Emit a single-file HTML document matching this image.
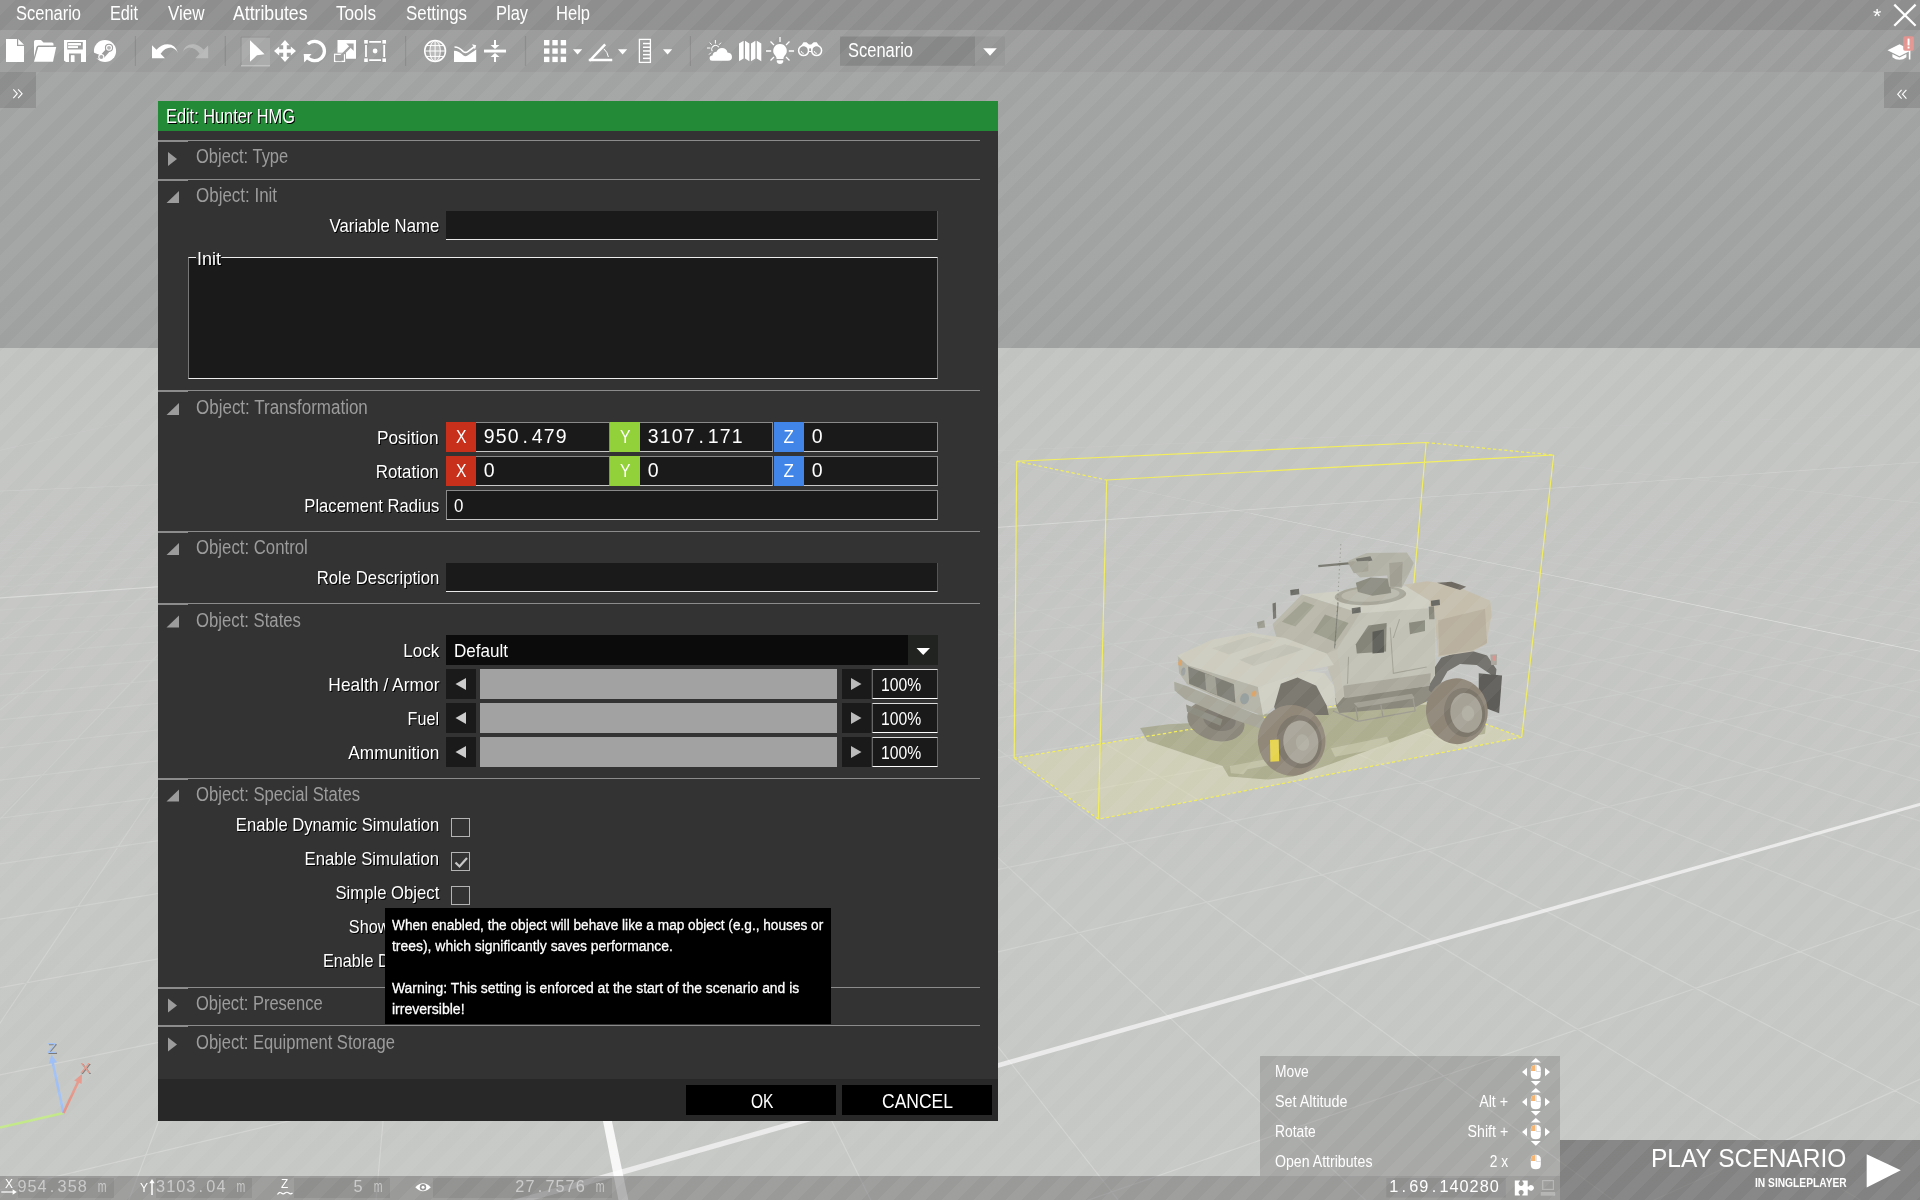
<!DOCTYPE html><html><head><meta charset='utf-8'><title>Eden Editor - Edit: Hunter HMG</title><style>
html,body{margin:0;padding:0;background:#a2a3a2;}
body{width:1920px;height:1200px;position:relative;overflow:hidden;font-family:"Liberation Sans",sans-serif;}
.a{position:absolute;}
.t{position:absolute;white-space:pre;line-height:1;display:block;}
svg{position:absolute;left:0;top:0;overflow:visible;}
</style></head><body>
<div class="a" id="sky" style="left:0;top:0;width:1920px;height:348px;background:linear-gradient(#a2a4a3,#a1a3a2 70%,#9fa1a0);"></div>
<div class="a" id="ground" style="left:0;top:348px;width:1920px;height:852px;background:linear-gradient(#c1c3c1,#c4c6c3 30%,#c6c8c5);"></div>
<svg width="1920" height="1200" viewBox="0 0 1920 1200"><defs><linearGradient id="gf" x1="0" y1="0" x2="0" y2="1"><stop offset="0" stop-color="#fff" stop-opacity="0"/><stop offset="0.13" stop-color="#fff" stop-opacity="0"/><stop offset="0.4" stop-color="#fff" stop-opacity="0.42"/><stop offset="0.7" stop-color="#fff" stop-opacity="0.8"/><stop offset="1" stop-color="#fff" stop-opacity="1"/></linearGradient><linearGradient id="gf2" x1="0" y1="0" x2="0" y2="1"><stop offset="0" stop-color="#fff" stop-opacity="0"/><stop offset="0.05" stop-color="#fff" stop-opacity="0.1"/><stop offset="0.2" stop-color="#fff" stop-opacity="0.7"/><stop offset="0.5" stop-color="#fff" stop-opacity="1"/><stop offset="1" stop-color="#fff" stop-opacity="1"/></linearGradient><mask id="gm" maskUnits="userSpaceOnUse" x="0" y="349" width="1920" height="851"><rect x="0" y="349" width="1920" height="851" fill="url(#gf)"/></mask><mask id="gm2" maskUnits="userSpaceOnUse" x="0" y="349" width="1920" height="851"><rect x="0" y="349" width="1920" height="851" fill="url(#gf2)"/></mask><clipPath id="gc"><rect x="0" y="349" width="1920" height="851"/></clipPath></defs><g clip-path="url(#gc)"><g mask="url(#gm)"><path d="M447.8 349.5L-3901.3 1215.0M448.0 349.5L-3649.9 1215.0M448.5 349.5L-3147.0 1215.0M448.7 349.5L-2895.5 1215.0M448.9 349.5L-2644.1 1215.0M449.2 349.5L-2392.6 1215.0M449.4 349.5L-2141.1 1215.0M449.6 349.5L-1889.6 1215.0M449.9 349.5L-1638.1 1215.0M450.1 349.5L-1386.5 1215.0M450.3 349.5L-1135.0 1215.0M450.6 349.5L-883.4 1215.0M450.8 349.5L-631.8 1215.0M451.0 349.5L-380.2 1215.0M451.3 349.5L-128.6 1215.0M451.5 349.5L123.1 1215.0M451.7 349.5L374.7 1215.0M452.2 349.5L878.1 1215.0M452.4 349.5L1129.8 1215.0M452.7 349.5L1381.5 1215.0M452.9 349.5L1633.2 1215.0M453.1 349.5L1884.9 1215.0M453.4 349.5L2136.7 1215.0M453.6 349.5L2388.5 1215.0M453.8 349.5L2640.3 1215.0M454.1 349.5L2892.1 1215.0M454.3 349.5L3143.9 1215.0M454.5 349.5L3395.7 1215.0M454.8 349.5L3647.6 1215.0M455.0 349.5L3899.5 1215.0M455.2 349.5L4151.3 1215.0M455.4 349.5L4403.2 1215.0M455.9 349.5L4907.1 1215.0M456.1 349.5L5159.0 1215.0M456.4 349.5L5411.0 1215.0M456.6 349.5L5663.0 1215.0M456.8 349.5L5915.0 1215.0M457.1 349.5L6167.0 1215.0M457.3 349.5L6419.0 1215.0M457.5 349.5L6671.0 1215.0M457.8 349.5L6923.1 1215.0M458.0 349.5L7175.2 1215.0M458.2 349.5L7427.3 1215.0M458.5 349.5L7679.4 1215.0M458.7 349.5L7931.5 1215.0M458.9 349.5L8183.6 1215.0M459.2 349.5L8435.8 1215.0M459.6 349.5L8940.1 1215.0M459.9 349.5L9192.3 1215.0M460.1 349.5L9444.5 1215.0M460.3 349.5L9696.8 1215.0M460.6 349.5L9949.0 1215.0M460.8 349.5L10201.3 1215.0M461.0 349.5L10453.5 1215.0M461.3 349.5L10705.8 1215.0M461.5 349.5L10958.1 1215.0M461.7 349.5L11210.5 1215.0M462.0 349.5L11462.8 1215.0M462.2 349.5L11715.1 1215.0M462.4 349.5L11967.5 1215.0M462.7 349.5L12219.9 1215.0M462.9 349.5L12472.3 1215.0M463.4 349.5L12977.2 1215.0M463.6 349.5L13229.6 1215.0M463.8 349.5L13482.1 1215.0M464.1 349.5L13734.5 1215.0M464.3 349.5L13987.0 1215.0M464.5 349.5L14239.5 1215.0M464.8 349.5L14492.1 1215.0M465.0 349.5L14744.6 1215.0M465.2 349.5L14997.2 1215.0M465.5 349.5L15249.7 1215.0M465.7 349.5L15502.3 1215.0M465.9 349.5L15754.9 1215.0M466.2 349.5L16007.6 1215.0M466.4 349.5L16260.2 1215.0M466.6 349.5L16512.8 1215.0M467.1 349.5L17018.2 1215.0M467.3 349.5L17270.9 1215.0M467.6 349.5L17523.6 1215.0M467.8 349.5L17776.3 1215.0M468.0 349.5L18029.1 1215.0M468.3 349.5L18281.8 1215.0M468.5 349.5L18534.6 1215.0M468.7 349.5L18787.4 1215.0M469.0 349.5L19040.2 1215.0M469.2 349.5L19293.0 1215.0M469.4 349.5L19545.9 1215.0M469.7 349.5L19798.7 1215.0M469.9 349.5L20051.6 1215.0M470.1 349.5L20304.5 1215.0M470.4 349.5L20557.4 1215.0M470.8 349.5L21063.2 1215.0M471.1 349.5L21316.2 1215.0M471.3 349.5L21569.1 1215.0M471.5 349.5L21822.1 1215.0M471.8 349.5L22075.1 1215.0M472.0 349.5L22328.1 1215.0M472.2 349.5L22581.2 1215.0M472.5 349.5L22834.2 1215.0M472.7 349.5L23087.3 1215.0M472.9 349.5L23340.3 1215.0M473.2 349.5L23593.4 1215.0M473.4 349.5L23846.5 1215.0M473.6 349.5L24099.7 1215.0M473.9 349.5L24352.8 1215.0M474.1 349.5L24605.9 1215.0M474.6 349.5L25112.3 1215.0M474.8 349.5L25365.5 1215.0M475.0 349.5L25618.7 1215.0M475.3 349.5L25871.9 1215.0M475.5 349.5L26125.2 1215.0M475.7 349.5L26378.5 1215.0M476.0 349.5L26631.7 1215.0M476.2 349.5L26885.0 1215.0M476.4 349.5L27138.3 1215.0M476.7 349.5L27391.7 1215.0M476.9 349.5L27645.0 1215.0M477.1 349.5L27898.4 1215.0M477.4 349.5L28151.7 1215.0M477.6 349.5L28405.1 1215.0M477.8 349.5L28658.5 1215.0M478.3 349.5L29165.4 1215.0M478.6 349.5L29418.8 1215.0M478.8 349.5L29672.3 1215.0M479.0 349.5L29925.8 1215.0M479.3 349.5L30179.3 1215.0M479.5 349.5L30432.8 1215.0M479.7 349.5L30686.3 1215.0M480.0 349.5L30939.9 1215.0M480.2 349.5L31193.4 1215.0M480.4 349.5L31447.0 1215.0M480.7 349.5L31700.6 1215.0M480.9 349.5L31954.2 1215.0M481.1 349.5L32207.8 1215.0M481.4 349.5L32461.5 1215.0M481.6 349.5L32715.1 1215.0M482.1 349.5L33222.5 1215.0M482.3 349.5L33476.2 1215.0M482.5 349.5L33729.9 1215.0M482.8 349.5L33983.7 1215.0M483.0 349.5L34237.4 1215.0M483.2 349.5L34491.2 1215.0M483.5 349.5L34745.0 1215.0M483.7 349.5L34998.7 1215.0M483.9 349.5L35252.6 1215.0M484.2 349.5L35506.4 1215.0M484.4 349.5L35760.2 1215.0M-20.0 395.1L3529.4 348.4M-20.0 395.5L3529.4 348.4M-20.0 395.9L3529.4 348.4M-20.0 396.3L3529.4 348.4M-20.0 396.7L3529.4 348.4M-20.0 397.2L3529.4 348.4M-20.0 397.6L3529.4 348.4M-20.0 398.1L3529.4 348.4M-20.0 398.5L3529.4 348.4M-20.0 399.0L3529.4 348.4M-20.0 399.5L3529.4 348.4M-20.0 400.0L3529.4 348.4M-20.0 400.5L3529.4 348.4M-20.0 401.0L3529.4 348.4M-20.0 402.0L3529.4 348.4M-20.0 402.5L3529.4 348.4M-20.0 403.1L3529.4 348.4M-20.0 403.7L3529.4 348.4M-20.0 404.2L3529.4 348.4M-20.0 404.8L3529.4 348.4M-20.0 405.4L3529.4 348.4M-20.0 406.0L3529.4 348.4M-20.0 406.6L3529.4 348.4M-20.0 407.3L3529.4 348.4M-20.0 407.9L3529.4 348.4M-20.0 408.6L3529.4 348.4M-20.0 409.2L3529.4 348.4M-20.0 409.9L3529.4 348.4M-20.0 410.6L3529.4 348.4M-20.0 412.1L3529.4 348.4M-20.0 412.9L3529.4 348.4M-20.0 413.7L3529.4 348.4M-20.0 414.5L3529.4 348.4M-20.0 415.3L3529.4 348.4M-20.0 416.1L3529.4 348.4M-20.0 417.0L3529.4 348.4M-20.0 417.9L3529.4 348.4M-20.0 418.8L3529.4 348.4M-20.0 419.7L3529.4 348.4M-20.0 420.6L3529.4 348.4M-20.0 421.6L3529.4 348.4M-20.0 422.6L3529.4 348.4M-20.0 423.7L3529.4 348.4M-20.0 424.7L3529.4 348.4M-20.0 427.0L3529.4 348.4M-20.0 428.1L3529.4 348.4M-20.0 429.3L3529.4 348.4M-20.0 430.5L3529.4 348.4M-20.0 431.8L3529.4 348.4M-20.0 433.1L3529.4 348.4M-20.0 434.5L3529.4 348.4M-20.0 435.9L3529.4 348.4M-20.0 437.3L3529.4 348.4M-20.0 438.8L3529.4 348.4M-20.0 440.4L3529.4 348.4M-20.0 442.0L3529.4 348.4M-20.0 443.6L3529.4 348.4M-20.0 445.3L3529.4 348.4M-20.0 447.1L3529.4 348.4M-20.0 450.9L3529.4 348.4M-20.0 452.9L3529.4 348.4M-20.0 454.9L3529.4 348.4M-20.0 457.1L3529.4 348.4M-20.0 459.3L3529.4 348.4M-20.0 461.7L3529.4 348.4M-20.0 464.1L3529.4 348.4M-20.0 466.6L3529.4 348.4M-20.0 469.3L3529.4 348.4M-20.0 472.1L3529.4 348.4M-20.0 475.0L3529.4 348.4M-20.0 478.1L3529.4 348.4M-20.0 481.3L3529.4 348.4M-20.0 484.6L3529.4 348.4M-20.0 488.2L3529.4 348.4M-20.0 495.9L3529.4 348.4M-20.0 500.0L3529.4 348.4M-20.0 504.4L3529.4 348.4M-20.0 509.1L3529.4 348.4M-20.0 514.1L3529.4 348.4M-20.0 519.4L3529.4 348.4M-20.0 525.0L3529.4 348.4M-20.0 531.0L3529.4 348.4M-20.0 537.4L3529.4 348.4M-20.0 544.3L3529.4 348.4M-20.0 551.8L3529.4 348.4M-20.0 559.8L3529.4 348.4M-20.0 568.5L3529.4 348.4M-20.0 577.9L3529.4 348.4M-20.0 588.2L3529.4 348.4M-20.0 611.7L3529.4 348.4M-20.0 625.3L3529.4 348.4M-20.0 640.4L3529.4 348.4M-20.0 657.3L3529.4 348.4M-20.0 676.2L3529.4 348.4M-20.0 697.6L3529.4 348.4M-20.0 721.9L3529.4 348.4M-20.0 750.0L3529.4 348.4M-20.0 782.6L3529.4 348.4M-20.0 820.9L3529.4 348.4M-20.0 866.7L3529.4 348.4M-20.0 922.3L3529.4 348.4M-20.0 991.2L3529.4 348.4M-20.0 1079.1L3529.4 348.4M-20.0 1194.7L3529.4 348.4M-20.0 1586.8L3529.4 348.4M-20.0 1960.3L3529.4 348.4M-20.0 2656.5L3529.4 348.4M-20.0 4411.5L3529.4 348.4M-20.0 17313.3L3529.4 348.4M-20.0 -7448.8L3529.4 348.4M-20.0 -2821.5L3529.4 348.4M-20.0 -1640.8L3529.4 348.4" stroke="#fff" stroke-width="1.2" opacity="0.23" fill="none"/></g><g mask="url(#gm2)"><polygon points="-20.0,1350.4 3529.4,348.4 -20.0,1357.4" fill="#fff" opacity="0.62"/><polygon points="-20.0,598.8 3529.4,348.4 -20.0,600.0" fill="#fff" opacity="0.45"/><polygon points="-20.0,491.6 3529.4,348.4 -20.0,492.2" fill="#fff" opacity="0.3"/><polygon points="621.4,1215.0 451.8,348.7 631.4,1215.0" fill="#fff" opacity="0.85"/><polygon points="4649.2,1215.0 451.8,348.7 4661.1,1215.0" fill="#fff" opacity="0.55"/><polygon points="8680.8,1215.0 451.8,348.7 8695.1,1215.0" fill="#fff" opacity="0.4"/><polygon points="12715.1,1215.0 451.8,348.7 12734.3,1215.0" fill="#fff" opacity="0.3"/><polygon points="-3405.6,1215.0 451.8,348.7 -3391.3,1215.0" fill="#fff" opacity="0.5"/></g></g><polygon points="1014.2,758 1098.3,819.2 1521.7,737.2 1404.1,694.5" fill="#e6e2a0" opacity="0.33"/><g transform="translate(1160 540) scale(0.208333)"><polygon points="-96,902 40,885 160,878 300,850 560,830 900,800 1300,790 1570,840 1560,930 1420,960 1290,905 1000,1010 780,1090 640,1135 520,1150 330,1135 300,1085 120,1025 -60,965" fill="#a09f80" opacity="0.7"/><polygon points="820,1000 1090,945 1110,990 840,1040" fill="#d4d3bb" opacity="0.5"/><polygon points="335,1085 520,1050 560,1075 420,1100 400,1125 340,1120" fill="#d4d3bb" opacity="0.5"/></g><path d="M1014.2 758L1098.3 819.2L1521.7 737.2L1404.1 694.5L1014.2 758M1016.7 461.3L1106.7 480M1426.2 442.5L1553.7 455" stroke="#f3ee5a" stroke-width="1.25" stroke-dasharray="3.2 2.4" fill="none"/><path d="M1016.7 461.3L1426.2 442.5M1106.7 480L1553.7 455M1016.7 461.3L1014.2 758M1106.7 480L1098.3 819.2M1553.7 455L1521.7 737.2M1426.2 442.5L1404.1 694.5" stroke="#f3ee5a" stroke-width="1.15" fill="none"/><g transform="translate(1160 540) scale(0.208333)"><ellipse cx="268" cy="868" rx="140" ry="95" fill="#8d887c" transform="rotate(15 268 868)"/><ellipse cx="285" cy="860" rx="80" ry="55" fill="#7c776d" transform="rotate(15 285 860)"/><polygon points="830,760 1300,690 1310,760 1230,800 860,830" fill="#8a877c"/><polygon points="1290,720 1300,640 1350,565 1470,525 1570,555 1615,620 1610,665 1580,640 1520,600 1440,595 1380,630 1340,700 1330,760" fill="#6f6e69"/><polygon points="1530,640 1642,650 1628,832 1530,795" fill="#5f5d5a"/><polygon points="1585,550 1618,548 1616,600 1590,600" fill="#a8a49b"/><polygon points="1596,556 1612,555 1611,580 1597,580" fill="#d9908c"/><ellipse cx="1425" cy="822" rx="148" ry="158" fill="#8f8678" transform="rotate(-8 1425 822)"/><ellipse cx="1462" cy="828" rx="98" ry="118" fill="#7d766b" transform="rotate(-8 1462 828)"/><ellipse cx="1470" cy="830" rx="76" ry="96" fill="#a6a296" transform="rotate(-8 1470 830)"/><ellipse cx="1478" cy="832" rx="30" ry="38" fill="#b0ada2" transform="rotate(-8 1478 832)"/><polygon points="1170,215 1280,198 1400,212 1585,292 1592,360 1565,500 1500,535 1335,560 1320,380 1290,300" fill="#c5bead"/><polygon points="1335,385 1560,330 1570,495 1500,530 1340,555" fill="#b9b09f"/><polygon points="1330,205 1400,200 1470,225 1440,240" fill="#6e6a62"/><polygon points="850,520 960,350 1285,325 1320,385 1320,650 1290,700 880,755 835,640 825,590" fill="#c2c1b5"/><polygon points="880,700 1300,640 1295,700 885,760" fill="#aaa89c"/><polygon points="785,545 850,520 880,755 848,792 835,700 800,600" fill="#c0bfb1"/><polygon points="940,500 1000,410 1088,398 1085,535 945,545" fill="#85857a"/><polygon points="1020,440 1075,430 1075,540 1020,545" fill="#5d5d57"/><polygon points="1195,397 1272,385 1272,437 1200,452" fill="#8b8c7f"/><path d="M905 560 L900 690 M1105 420 L1120 640 L1280 610 M1150 380 L1120 470" stroke="#a3a296" stroke-width="5" fill="none"/><polygon points="680,262 830,248 1180,222 1300,295 1285,328 960,352" fill="#cfcec2"/><polygon points="540,405 680,262 960,352 850,525 800,545 560,470" fill="#b8b7a9"/><polygon points="585,392 690,295 742,315 650,415" fill="#a2a392"/><polygon points="735,445 792,358 905,398 842,490" fill="#9b9c8c"/><polygon points="85,555 250,478 430,445 600,470 800,545 835,600 700,628 470,706 130,600" fill="#cdccbf"/><polygon points="250,520 440,460 540,480 330,550" fill="#c5c4b8"/><polygon points="380,575 600,500 690,525 450,605" fill="#c3c2b6"/><polygon points="85,557 130,600 470,706 495,842 370,800 130,692 92,640" fill="#b4b3a6"/><polygon points="135,607 355,692 362,782 140,690" fill="#807f76"/><polygon points="215,640 265,658 275,745 222,722" fill="#a09f93"/><ellipse cx="406" cy="762" rx="21" ry="27" fill="#98a0a0" transform="rotate(10 406 762)"/><ellipse cx="452" cy="738" rx="11" ry="15" fill="#dba56b" transform="rotate(10 452 738)"/><ellipse cx="97" cy="590" rx="9" ry="15" fill="#dba56b" transform="rotate(10 97 590)"/><ellipse cx="112" cy="632" rx="10" ry="20" fill="#9ba09e" transform="rotate(10 112 632)"/><polygon points="68,680 130,702 500,852 500,912 300,842 120,765 70,722" fill="#a8a79a"/><polygon points="125,790 300,860 290,892 130,825" fill="#8f8e83"/><polygon points="470,706 700,628 790,640 835,700 845,790 800,795 750,700 660,660 580,690 548,800 495,842" fill="#d0cfc3"/><polygon points="548,800 580,690 660,660 750,700 800,795 810,840 560,840" fill="#77746b"/><ellipse cx="632" cy="962" rx="162" ry="170" fill="#91887a" transform="rotate(-8 632 962)"/><ellipse cx="668" cy="968" rx="108" ry="128" fill="#7f786d" transform="rotate(-8 668 968)"/><ellipse cx="676" cy="970" rx="84" ry="104" fill="#a8a498" transform="rotate(-8 676 970)"/><ellipse cx="684" cy="972" rx="32" ry="40" fill="#b1aea3" transform="rotate(-8 684 972)"/><polygon points="528,960 570,958 572,1062 530,1065" fill="#e6d44c"/><polygon points="930,782 1210,738 1222,760 950,805" fill="#a3a195"/><path d="M830 820 L950 870 L1225 820 M950 870 L940 800 M1225 820 L1215 760 M1070 848 L1060 790" stroke="#9b998e" stroke-width="6" fill="none"/><ellipse cx="1010" cy="266" rx="172" ry="46" fill="#a7a699" transform="rotate(-3 1010 266)"/><ellipse cx="1010" cy="262" rx="140" ry="34" fill="#bab9ac" transform="rotate(-3 1010 262)"/><polygon points="940,205 1010,180 1100,185 1110,255 1020,268 950,250" fill="#8e8d82"/><polygon points="905,100 990,62 1185,60 1218,110 1195,165 1160,230 1100,225 1090,170 960,180 930,150" fill="#b3b2a6"/><polygon points="1100,110 1165,105 1160,225 1105,225" fill="#a19f93"/><polygon points="940,90 1010,78 1020,98 950,112" fill="#6f6f68"/><path d="M760 125 L930 110" stroke="#77776e" stroke-width="11" fill="none"/><polygon points="900,105 1000,100 1000,150 930,160" fill="#a5a497"/><polygon points="625,240 667,234 669,260 627,266" fill="#6b6b66"/><polygon points="920,328 962,322 964,348 922,354" fill="#6b6b66"/><polygon points="1300,292 1342,286 1344,312 1302,318" fill="#6b6b66"/><polygon points="540,305 556,300 558,375 543,380" fill="#77766e"/><polygon points="1290,320 1315,318 1318,380 1292,380" fill="#8a897e"/><path d="M868 20 L840 520" stroke="#7a7a72" stroke-width="3" stroke-dasharray="6 14" fill="none"/><path d="M855 300 L838 520" stroke="#77766e" stroke-width="4" fill="none"/><polygon points="465,395 500,385 505,420 470,425" fill="#9c9b8f"/></g><path d="M63.5 1113 L0 1127.5" stroke="#c3e88a" stroke-width="2.6" fill="none"/><path d="M63.5 1113 L52.6 1062" stroke="#9fc0f7" stroke-width="2.6" fill="none"/><path d="M48.8 1063.8 L51.5 1054.5 L57 1062.2 Z" fill="#9fc0f7"/><path d="M63.5 1113 L78.5 1081" stroke="#e59688" stroke-width="2.6" fill="none"/><path d="M74.2 1080.6 L82 1074 L81.6 1084 Z" fill="#e59688"/></svg>
<span class="t" style="font-size:14.5px;color:#9fc0f7;top:1040.7px;left:47px;transform-origin:0 50%;transform:scaleX(1.0723);text-shadow:0.93px 1px 0 rgba(90,90,90,0.7);">Z</span>
<span class="t" style="font-size:15.5px;color:#e59688;top:1060.4px;left:80px;transform-origin:0 50%;transform:scaleX(1.0151);text-shadow:0.99px 1px 0 rgba(90,90,90,0.7);">X</span>
<div class="a" id="menubar" style="left:0;top:0;width:1920px;height:30px;background:rgba(124,124,124,0.55);"></div>
<span class="t" style="font-size:19.5px;color:#fff;top:3.5px;left:16px;transform-origin:0 50%;transform:scaleX(0.8445);">Scenario</span>
<span class="t" style="font-size:19.5px;color:#fff;top:3.5px;left:110px;transform-origin:0 50%;transform:scaleX(0.8331);">Edit</span>
<span class="t" style="font-size:19.5px;color:#fff;top:3.5px;left:167.5px;transform-origin:0 50%;transform:scaleX(0.8707);">View</span>
<span class="t" style="font-size:19.5px;color:#fff;top:3.5px;left:233px;transform-origin:0 50%;transform:scaleX(0.9044);">Attributes</span>
<span class="t" style="font-size:19.5px;color:#fff;top:3.5px;left:336px;transform-origin:0 50%;transform:scaleX(0.8785);">Tools</span>
<span class="t" style="font-size:19.5px;color:#fff;top:3.5px;left:406px;transform-origin:0 50%;transform:scaleX(0.8656);">Settings</span>
<span class="t" style="font-size:19.5px;color:#fff;top:3.5px;left:496px;transform-origin:0 50%;transform:scaleX(0.8435);">Play</span>
<span class="t" style="font-size:19.5px;color:#fff;top:3.5px;left:556px;transform-origin:0 50%;transform:scaleX(0.8477);">Help</span>
<div class="a" id="toolbar" style="left:0;top:30px;width:1920px;height:42px;background:rgba(150,150,150,0.55);"></div>
<div class="a" style="left:0;top:72px;width:36px;height:36px;background:rgba(120,120,120,0.5);"></div>
<div class="a" style="left:1884px;top:72px;width:36px;height:36px;background:rgba(120,120,120,0.5);"></div>
<svg width="1920" height="120" viewBox="0 0 1920 120"><rect x="134.8" y="36" width="1.2" height="30" fill="#888" opacity="0.8"/><rect x="224.70000000000002" y="36" width="1.2" height="30" fill="#888" opacity="0.8"/><rect x="405.0" y="36" width="1.2" height="30" fill="#888" opacity="0.8"/><rect x="524.9" y="36" width="1.2" height="30" fill="#888" opacity="0.8"/><rect x="689.8" y="36" width="1.2" height="30" fill="#888" opacity="0.8"/><path d="M6 39 H17 V46 H24 V62 H6 Z M18.2 39 L24 44.8 H18.2 Z" fill="#fff"/><path d="M34 41.5 Q34 40 35.5 40 H41 L43.5 42.5 H52 Q53.5 42.5 53.5 44 V45.5 H38.5 Q37 45.5 36.5 47 L34 57 Z" fill="#fff"/><path d="M38.2 47 H56.2 L53 61.7 H34 Z" fill="#fff"/><path d="M64 40 H86 V62 H81 V53.5 H69 V62 H66 L64 60.5 Z M67.3 42 V49.5 H82.8 V42 Z M68.2 43.2 H81 V45.2 H68.2 Z M68.2 46.2 H78 V48 H68.2 Z M71 55.5 H74.3 V62 H71 Z" fill="#fff" fill-rule="evenodd"/><rect x="68.2" y="43.2" width="12.8" height="2" fill="#fff"/><rect x="68.2" y="46.3" width="9.8" height="1.8" fill="#fff"/><rect x="70.8" y="55.3" width="3.6" height="6.7" fill="#fff"/><circle cx="105" cy="51" r="11.1" fill="#fff"/><path d="M93.5 52.5 L100.5 55.3 L106.5 48.5 L111 50 L103.5 58.5 L99 59.2 L94.6 57.5 Z" fill="#9b9b9b"/><circle cx="109" cy="47.8" r="4.1" fill="#9b9b9b"/><circle cx="109" cy="47.8" r="3" fill="#fff"/><circle cx="109" cy="47.8" r="1.9" fill="#b5b5b5"/><circle cx="101.3" cy="57" r="3.1" fill="#fff"/><circle cx="101.3" cy="57" r="2" fill="#aaa"/><path d="M152 45.3 V58.2 H165 L160.6 53.8 Q165 47.6 171 47.6 Q175.5 48.4 177.9 53 Q175.6 44.2 167.5 44.2 Q161 44.2 156.5 49.8 Z" fill="#fff"/><path d="M208.2 45.3 V58.2 H195.2 L199.6 53.8 Q195.2 47.6 189.2 47.6 Q184.7 48.4 182.3 53 Q184.6 44.2 192.7 44.2 Q199.2 44.2 203.7 49.8 Z" fill="#fff" opacity="0.28"/><rect x="240.6" y="36.5" width="29.4" height="29.5" fill="#fff" opacity="0.13"/><path d="M241 66 V37 H270" fill="none" stroke="#8a8a8a" stroke-width="1" opacity="0.9"/><path d="M241 65.8 H270" fill="none" stroke="#c4c4c4" stroke-width="1.2"/><path d="M250 40.2 L264.6 54.3 L257 55.3 L250 61.8 Z" fill="#fff"/><path d="M285 40 L289.6 45.2 H286.8 V49.2 H290.8 V46.4 L296 51 L290.8 55.6 V52.8 H286.8 V56.8 H289.6 L285 62 L280.4 56.8 H283.2 V52.8 H279.2 V55.6 L274 51 L279.2 46.4 V49.2 H283.2 V45.2 H280.4 Z" fill="#fff"/><path d="M307.3 57.2 A9.7 9.7 0 1 0 307.8 44.2" fill="none" stroke="#fff" stroke-width="3.3"/><path d="M303.8 54 L310.6 54.8 L304.4 62.2 Z" fill="#fff"/><path d="M303.8 54 L311.5 54 L304.3 62.3 Z" fill="#fff"/><path d="M337.5 40 H356 V58.8 H346 V52.8 H337.5 Z" fill="#fff"/><rect x="334.6" y="54.3" width="9.9" height="7.1" fill="none" stroke="#fff" stroke-width="1.3"/><path d="M338 59 L351 46" stroke="#9d9d9d" stroke-width="2.4" fill="none"/><path d="M346.3 43.4 H353.6 V50.7 Z" fill="#9d9d9d"/><path d="M335.6 54.6 V61.2 H342.2 Z" fill="#9d9d9d"/><rect x="364.2" y="40" width="3.6" height="3.6" fill="#fff"/><rect x="382.4" y="40" width="3.6" height="3.6" fill="#fff"/><rect x="364.2" y="58.4" width="3.6" height="3.6" fill="#fff"/><rect x="382.4" y="58.4" width="3.6" height="3.6" fill="#fff"/><path d="M369.2 41.8 H381 M369.2 60.2 H381 M366 45 V57 M384.2 45 V57" stroke="#fff" stroke-width="1.8" fill="none"/><circle cx="375.1" cy="51" r="2.4" fill="#fff"/><circle cx="435.1" cy="51" r="10.4" fill="none" stroke="#fff" stroke-width="1.5"/><ellipse cx="435.1" cy="51" rx="5.2" ry="10.3" fill="none" stroke="#fff" stroke-width="1"/><path d="M435.1 40.5 V61.5 M425 51 H445.2 M426.5 45.6 H443.7 M426.5 56.4 H443.7" stroke="#fff" stroke-width="1" fill="none"/><rect x="430" y="42" width="10.2" height="18" fill="#fff" opacity="0.28"/><path d="M454 50.8 Q459 51 463.5 55.5 Q465.5 57 467.5 55.5 L476.2 49.5 V62 H454 Z" fill="#fff"/><path d="M454.5 47 Q459 47 463.3 51.6 Q465.5 53.3 467.8 51.6 L474 47" fill="none" stroke="#fff" stroke-width="1.7"/><path d="M472 44.3 L476.2 45.2 L475 49.6 Z" fill="#fff"/><rect x="484" y="49.6" width="22" height="2.9" fill="#fff"/><path d="M494 40 H496 V45 H499.5 L495 49 L490.5 45 H494 Z M494 62 H496 V57 H499.5 L495 53.1 L490.5 57 H494 Z" fill="#fff"/><rect x="544.00" y="40.00" width="5.4" height="5.4" fill="#fff"/><rect x="544.00" y="48.35" width="5.4" height="5.4" fill="#fff"/><rect x="544.00" y="56.70" width="5.4" height="5.4" fill="#fff"/><rect x="552.35" y="40.00" width="5.4" height="5.4" fill="#fff"/><rect x="552.35" y="48.35" width="5.4" height="5.4" fill="#fff"/><rect x="552.35" y="56.70" width="5.4" height="5.4" fill="#fff"/><rect x="560.70" y="40.00" width="5.4" height="5.4" fill="#fff"/><rect x="560.70" y="48.35" width="5.4" height="5.4" fill="#fff"/><rect x="560.70" y="56.70" width="5.4" height="5.4" fill="#fff"/><path d="M573 49.3 H582.2 L577.6 54.6 Z" fill="#fff"/><path d="M618 49.3 H627.2 L622.6 54.6 Z" fill="#fff"/><path d="M663 49.3 H672.2 L667.6 54.6 Z" fill="#fff"/><path d="M590 60 H611 M590.3 60 L604.3 45.3" stroke="#fff" stroke-width="2.5" fill="none" stroke-linecap="square"/><path d="M603.8 48.8 Q607.6 52 608.4 57" stroke="#fff" stroke-width="1" fill="none"/><rect x="639.4" y="39.4" width="11" height="23" fill="none" stroke="#fff" stroke-width="1.3"/><rect x="643" y="42.8" width="7" height="1.5" fill="#fff"/><rect x="643" y="46.5" width="7" height="1.5" fill="#fff"/><rect x="643" y="50.2" width="7" height="1.5" fill="#fff"/><rect x="643" y="53.9" width="7" height="1.5" fill="#fff"/><rect x="643" y="57.6" width="7" height="1.5" fill="#fff"/><path d="M712 60.8 Q709.6 60.8 709.6 58.3 Q709.6 55.8 712.5 55.6 Q712.8 51.8 716.5 51.8 Q718 48 722 48 Q726.5 48 727.5 52.5 Q732 52.8 732 57 Q732 60.8 728 60.8 Z" fill="#fff"/><path d="M712.3 51.2 A3.7 3.7 0 0 1 718.8 47.2" fill="none" stroke="#fff" stroke-width="1.1"/><path d="M715.4 40 V43.6 M707 48 H710.4 M709.6 42.5 L711.8 44.7 M721 42.7 L719 44.8 M709 54.6 L711 52.6" stroke="#fff" stroke-width="1" fill="none"/><path d="M739 43.5 L743.6 40.8 V58.5 L739 61.3 Z M745 40.8 L749.4 43.5 V61.3 L745 58.5 Z M751 43.5 L755.4 40.8 V58.5 L751 61.3 Z M756.8 40.8 L761.3 43.5 V61.3 L756.8 58.5 Z" fill="#fff"/><path d="M780 44 A6.8 6.8 0 0 1 784.6 55.8 Q783.4 57 783.4 59 H776.6 Q776.6 57 775.4 55.8 A6.8 6.8 0 0 1 780 44 Z" fill="#fff"/><path d="M776.8 60.3 H783.2 V62 Q782.5 64 780 64 Q777.5 64 776.8 62 Z" fill="#fff"/><path d="M780 37 V42 M766 51 H771.2 M788.8 51 H794 M770.5 41.5 L774 45 M789.5 41.5 L786 45 M770.5 60.5 L774 57 M789.5 60.5 L786 57" stroke="#fff" stroke-width="1.3" fill="none"/><circle cx="803.6" cy="50.6" r="5" fill="none" stroke="#fff" stroke-width="1.5"/><circle cx="816.6" cy="50.6" r="5" fill="none" stroke="#fff" stroke-width="1.5"/><path d="M800.3 47 L803.5 42.3 H806.5 L809 44.5 H811.2 L813.7 42.3 H816.7 L819.9 47 L816.6 45.4 L812.3 47.5 V52 H807.9 V47.5 L803.6 45.4 Z" fill="#fff"/><path d="M801.2 51 A2.6 2.6 0 0 0 803.8 53.4 M814.2 51 A2.6 2.6 0 0 0 816.8 53.4" fill="none" stroke="#fff" stroke-width="0.9"/><rect x="809.2" y="48.4" width="1.8" height="2.6" fill="#9b9b9b"/><rect x="840" y="36.5" width="135" height="29.3" fill="#000" opacity="0.13"/><rect x="975" y="36.5" width="30" height="29.3" fill="#000" opacity="0.045"/><path d="M983.2 48.3 H996.8 L990 55.8 Z" fill="#fff"/><path d="M1894.3 4.6 L1915.6 25.8 M1915.6 4.6 L1894.3 25.8" stroke="#fff" stroke-width="2.2" fill="none"/><path d="M1887.5 50.2 L1899.5 44.3 L1911.4 50.2 L1899.5 56.2 Z" fill="#fff"/><path d="M1892.4 54 L1899.5 57.6 L1906.4 54 V57.2 Q1903.5 59.8 1899.5 59.8 Q1895.4 59.8 1892.4 57.2 Z" fill="#fff"/><path d="M1909.6 50.8 V59.5" stroke="#fff" stroke-width="1.6"/><rect x="1903.2" y="36.3" width="10.6" height="14.5" rx="1.8" fill="#e39490"/><rect x="1907.6" y="38.6" width="1.9" height="6.8" fill="#fff"/><rect x="1907.6" y="46.6" width="1.9" height="1.9" fill="#fff"/><path d="M13.3 89.3 L17.3 93.7 L13.3 98.2 M18.1 89.3 L22.1 93.7 L18.1 98.2" stroke="#fff" stroke-width="1.1" fill="none"/><path d="M1901.6 89.8 L1897.7 94.2 L1901.6 98.6 M1906.4 89.8 L1902.5 94.2 L1906.4 98.6" stroke="#fff" stroke-width="1.1" fill="none"/></svg>
<span class="t" style="font-size:19.5px;color:#fff;top:40.8px;left:847.7px;transform-origin:0 50%;transform:scaleX(0.8445);">Scenario</span>
<span class="t" style="font-size:19.5px;color:#fff;top:6.5px;left:1873px;transform-origin:0 50%;transform:scaleX(1.0905);">*</span>
<div class="a" id="status" style="left:0;top:1176px;width:1560px;height:24px;background:rgba(110,110,110,0.5);"></div>
<div class="a" style="left:18px;top:1178px;width:96px;height:19.5px;background:rgba(0,0,0,0.07);"></div>
<div class="a" style="left:156px;top:1178px;width:96px;height:19.5px;background:rgba(0,0,0,0.07);"></div>
<div class="a" style="left:293.5px;top:1178px;width:96.0px;height:19.5px;background:rgba(0,0,0,0.07);"></div>
<div class="a" style="left:432.5px;top:1178px;width:179.5px;height:19.5px;background:rgba(0,0,0,0.07);"></div>
<svg width="1" height="1"><text x="17.40 27.45 37.50 49.82 57.60 67.65 77.70 90.02" y="1192.4" font-family="Liberation Sans, sans-serif" font-size="16.3" fill="#c9c9c9" xml:space="preserve">954.358 <tspan x="97.80" textLength="8.75" lengthAdjust="spacingAndGlyphs">m</tspan></text></svg>
<svg width="1" height="1"><text x="156.10 166.15 176.20 186.25 198.57 206.35 216.40 228.72" y="1192.4" font-family="Liberation Sans, sans-serif" font-size="16.3" fill="#c9c9c9" xml:space="preserve">3103.04 <tspan x="236.50" textLength="8.75" lengthAdjust="spacingAndGlyphs">m</tspan></text></svg>
<svg width="1" height="1"><text x="353.53 365.85" y="1192.4" font-family="Liberation Sans, sans-serif" font-size="16.3" fill="#c9c9c9" xml:space="preserve">5 <tspan x="373.63" textLength="8.75" lengthAdjust="spacingAndGlyphs">m</tspan></text></svg>
<svg width="1" height="1"><text x="515.33 525.38 537.70 545.48 555.53 565.58 575.63 587.95" y="1192.4" font-family="Liberation Sans, sans-serif" font-size="16.3" fill="#c9c9c9" xml:space="preserve">27.7576 <tspan x="595.73" textLength="8.75" lengthAdjust="spacingAndGlyphs">m</tspan></text></svg>
<span class="t" style="font-size:12.5px;color:#fff;top:1177.9px;left:4.7px;transform-origin:0 50%;transform:scaleX(0.9588);">X</span>
<span class="t" style="font-size:13px;color:#fff;top:1180.7px;left:139.7px;transform-origin:0 50%;transform:scaleX(0.9225);">Y</span>
<span class="t" style="font-size:12.5px;color:#fff;top:1177.9px;left:281.3px;transform-origin:0 50%;transform:scaleX(0.9423);">Z</span>
<svg width="1920" height="1200" viewBox="0 0 1920 1200"><path d="M1.3 1192 H15" stroke="#fff" stroke-width="1.2" fill="none"/><path d="M12.6 1189.3 L16.8 1192 L12.6 1194.7 Z" fill="#fff"/><path d="M152 1195 V1181.5" stroke="#fff" stroke-width="1.5" fill="none"/><path d="M149.3 1183.2 L152 1179 L154.7 1183.2 Z" fill="#fff"/><path d="M277.5 1194.5 Q279.4 1191.5 281.3 1193 Q283.2 1194.6 285 1193 Q286.9 1191.5 288.8 1193 Q290.6 1194.6 292.5 1193" stroke="#fff" stroke-width="1.2" fill="none"/><path d="M415.3 1187.3 Q423 1179.3 430.8 1187.3 Q423 1195.3 415.3 1187.3 Z" fill="#fff"/><circle cx="423" cy="1187.3" r="3.2" fill="#909090"/><circle cx="423" cy="1187.3" r="1.5" fill="#fff"/></svg>
<div class="a" style="left:1260px;top:1056px;width:300px;height:120px;background:rgba(100,100,100,0.3);"></div>
<div class="a" style="left:1560px;top:1140px;width:360px;height:60px;background:rgba(84,84,84,0.6);"></div>
<span class="t" style="font-size:15.8px;color:#fff;top:1063.9px;left:1275px;transform-origin:0 50%;transform:scaleX(0.8751);">Move</span>
<span class="t" style="font-size:15.8px;color:#fff;top:1093.9px;left:1275px;transform-origin:0 50%;transform:scaleX(0.9069);">Set Altitude</span>
<span class="t" style="font-size:15.8px;color:#fff;top:1093.9px;right:411.5px;transform-origin:100% 50%;transform:scaleX(0.9011);">Alt +</span>
<span class="t" style="font-size:15.8px;color:#fff;top:1123.9px;left:1275px;transform-origin:0 50%;transform:scaleX(0.8731);">Rotate</span>
<span class="t" style="font-size:15.8px;color:#fff;top:1123.9px;right:411.5px;transform-origin:100% 50%;transform:scaleX(0.8978);">Shift +</span>
<span class="t" style="font-size:15.8px;color:#fff;top:1153.9px;left:1275px;transform-origin:0 50%;transform:scaleX(0.8950);">Open Attributes</span>
<span class="t" style="font-size:15.8px;color:#fff;top:1153.9px;right:411.5px;transform-origin:100% 50%;transform:scaleX(0.8710);">2 x</span>
<svg width="1920" height="1200" viewBox="0 0 1920 1200"><path d="M1530.8 1069.2 Q1530.8 1064.7 1535.8 1064.7 Q1540.8 1064.7 1540.8 1069.2 V1074.4 Q1540.8 1079.3 1535.8 1079.3 Q1530.8 1079.3 1530.8 1074.4 Z" fill="#fff"/><path d="M1531 1068.9 Q1531 1065.0 1535.4 1064.9 V1070.9 H1531 Z" fill="#f6b26b"/><path d="M1536.3 1065.2 V1071.5 H1540.6" stroke="#c8c8c8" stroke-width="0.6" fill="none"/><path d="M1527 1067.8 V1076.2 L1522 1072.0 Z M1545 1067.8 V1076.2 L1550 1072.0 Z M1530.8 1062.5 H1540.8 L1535.8 1058.0 Z M1530.8 1081.0 H1540.8 L1535.8 1085.7 Z" fill="#fff"/><path d="M1530.8 1099.2 Q1530.8 1094.7 1535.8 1094.7 Q1540.8 1094.7 1540.8 1099.2 V1104.4 Q1540.8 1109.3 1535.8 1109.3 Q1530.8 1109.3 1530.8 1104.4 Z" fill="#fff"/><path d="M1531 1098.9 Q1531 1095.0 1535.4 1094.9 V1100.9 H1531 Z" fill="#f6b26b"/><path d="M1536.3 1095.2 V1101.5 H1540.6" stroke="#c8c8c8" stroke-width="0.6" fill="none"/><path d="M1527 1097.8 V1106.2 L1522 1102.0 Z M1545 1097.8 V1106.2 L1550 1102.0 Z M1530.8 1092.5 H1540.8 L1535.8 1088.0 Z M1530.8 1111.0 H1540.8 L1535.8 1115.7 Z" fill="#fff"/><path d="M1530.8 1129.2 Q1530.8 1124.7 1535.8 1124.7 Q1540.8 1124.7 1540.8 1129.2 V1134.4 Q1540.8 1139.3 1535.8 1139.3 Q1530.8 1139.3 1530.8 1134.4 Z" fill="#fff"/><path d="M1531 1128.9 Q1531 1125.0 1535.4 1124.9 V1130.9 H1531 Z" fill="#f6b26b"/><path d="M1536.3 1125.2 V1131.5 H1540.6" stroke="#c8c8c8" stroke-width="0.6" fill="none"/><path d="M1527 1127.8 V1136.2 L1522 1132.0 Z M1545 1127.8 V1136.2 L1550 1132.0 Z M1530.8 1122.5 H1540.8 L1535.8 1118.0 Z M1530.8 1141.0 H1540.8 L1535.8 1145.7 Z" fill="#fff"/><path d="M1530.8 1159.2 Q1530.8 1154.7 1535.8 1154.7 Q1540.8 1154.7 1540.8 1159.2 V1164.4 Q1540.8 1169.3 1535.8 1169.3 Q1530.8 1169.3 1530.8 1164.4 Z" fill="#fff"/><path d="M1531 1158.9 Q1531 1155.0 1535.4 1154.9 V1160.9 H1531 Z" fill="#f6b26b"/><path d="M1536.3 1155.2 V1161.5 H1540.6" stroke="#c8c8c8" stroke-width="0.6" fill="none"/><path d="M1866.7 1154.2 L1900.8 1170.3 L1866.7 1187.5 Z" fill="#fff"/><rect x="1386.3" y="1178" width="119.5" height="19.5" fill="#000" opacity="0.07"/><path d="M1514.8 1180.6 H1519.9 V1181.3 A2.5 2.5 0 1 0 1522.3 1181.3 V1180.6 H1527.7 V1186.4 H1528.8 A2.7 2.7 0 1 1 1528.8 1189.4 H1527.7 V1195.5 H1522.3 V1194.6 A2.5 2.5 0 1 0 1519.9 1194.6 V1195.5 H1514.8 Z" fill="#fff"/><rect x="1542.7" y="1180.6" width="10.7" height="8.8" fill="none" stroke="#fff" stroke-width="1.2" opacity="0.28"/><rect x="1540.7" y="1192" width="14.5" height="3.7" fill="#fff" opacity="0.28"/></svg>
<svg width="1" height="1"><text x="1389.20 1401.52 1409.30 1419.35 1431.67 1439.45 1449.50 1459.55 1469.60 1479.65 1489.70" y="1192.4" font-family="Liberation Sans, sans-serif" font-size="16.3" fill="#fff" xml:space="preserve">1.69.140280</text></svg>
<span class="t" style="font-size:25.3px;color:#fff;top:1146.4px;left:1650.5px;transform-origin:0 50%;transform:scaleX(0.9692);">PLAY SCENARIO</span>
<span class="t" style="font-size:12.1px;color:#fff;top:1176.8px;font-weight:700;left:1755px;transform-origin:0 50%;transform:scaleX(0.8458);">IN SINGLEPLAYER</span>
<div class="a" id="stripes" style="left:0;top:0;width:1920px;height:1200px;background:repeating-linear-gradient(135deg,rgba(255,255,255,0.05) 0,rgba(255,255,255,0.05) 11.3px,rgba(255,255,255,0) 11.3px,rgba(255,255,255,0) 22.6px);"></div>
<div class="a" id="dlg" style="left:158px;top:101px;width:840px;height:1020px;background:#333;"></div>
<div class="a" style="left:158px;top:101px;width:840px;height:30px;background:#238a37;"></div>
<span class="t" style="font-size:19.5px;color:#fff;top:106.5px;left:166.2px;transform-origin:0 50%;transform:scaleX(0.8376);text-shadow:1.19px 1px 0 #000;">Edit: Hunter HMG</span>
<div class="a" style="left:158px;top:1079px;width:840px;height:42px;background:#282828;"></div>
<div class="a" style="left:158px;top:140px;width:822px;height:1px;background:#8c8c8c;"></div>
<div class="a" style="left:158px;top:140px;width:30px;height:2px;background:#8c8c8c;"></div>
<div class="a" style="left:158px;top:179px;width:822px;height:1px;background:#8c8c8c;"></div>
<div class="a" style="left:158px;top:179px;width:30px;height:2px;background:#8c8c8c;"></div>
<div class="a" style="left:158px;top:390px;width:822px;height:1px;background:#8c8c8c;"></div>
<div class="a" style="left:158px;top:390px;width:30px;height:2px;background:#8c8c8c;"></div>
<div class="a" style="left:158px;top:531px;width:822px;height:1px;background:#8c8c8c;"></div>
<div class="a" style="left:158px;top:531px;width:30px;height:2px;background:#8c8c8c;"></div>
<div class="a" style="left:158px;top:603px;width:822px;height:1px;background:#8c8c8c;"></div>
<div class="a" style="left:158px;top:603px;width:30px;height:2px;background:#8c8c8c;"></div>
<div class="a" style="left:158px;top:778px;width:822px;height:1px;background:#8c8c8c;"></div>
<div class="a" style="left:158px;top:778px;width:30px;height:2px;background:#8c8c8c;"></div>
<div class="a" style="left:158px;top:987px;width:822px;height:1px;background:#8c8c8c;"></div>
<div class="a" style="left:158px;top:987px;width:30px;height:2px;background:#8c8c8c;"></div>
<div class="a" style="left:158px;top:1025px;width:822px;height:1px;background:#8c8c8c;"></div>
<div class="a" style="left:158px;top:1025px;width:30px;height:2px;background:#8c8c8c;"></div>
<span class="t" style="font-size:20px;color:#9c9c9c;top:146.1px;left:195.6px;transform-origin:0 50%;transform:scaleX(0.8238);">Object: Type</span>
<svg width="1920" height="1200"><polygon points="168,152 177,159 168,166" fill="#9c9c9c"/></svg>
<span class="t" style="font-size:20px;color:#9c9c9c;top:185.1px;left:195.6px;transform-origin:0 50%;transform:scaleX(0.8482);">Object: Init</span>
<svg width="1920" height="1200"><polygon points="179,191 179,203 166.5,203" fill="#9c9c9c"/></svg>
<span class="t" style="font-size:20px;color:#9c9c9c;top:397.1px;left:195.6px;transform-origin:0 50%;transform:scaleX(0.8493);">Object: Transformation</span>
<svg width="1920" height="1200"><polygon points="179,403 179,415 166.5,415" fill="#9c9c9c"/></svg>
<span class="t" style="font-size:20px;color:#9c9c9c;top:537.1px;left:195.6px;transform-origin:0 50%;transform:scaleX(0.8381);">Object: Control</span>
<svg width="1920" height="1200"><polygon points="179,543 179,555 166.5,555" fill="#9c9c9c"/></svg>
<span class="t" style="font-size:20px;color:#9c9c9c;top:609.6px;left:195.6px;transform-origin:0 50%;transform:scaleX(0.8352);">Object: States</span>
<svg width="1920" height="1200"><polygon points="179,615.5 179,627.5 166.5,627.5" fill="#9c9c9c"/></svg>
<span class="t" style="font-size:20px;color:#9c9c9c;top:783.6px;left:195.6px;transform-origin:0 50%;transform:scaleX(0.8335);">Object: Special States</span>
<svg width="1920" height="1200"><polygon points="179,789.5 179,801.5 166.5,801.5" fill="#9c9c9c"/></svg>
<span class="t" style="font-size:20px;color:#9c9c9c;top:992.6px;left:195.6px;transform-origin:0 50%;transform:scaleX(0.8255);">Object: Presence</span>
<svg width="1920" height="1200"><polygon points="168,998.5 177,1005.5 168,1012.5" fill="#9c9c9c"/></svg>
<span class="t" style="font-size:20px;color:#9c9c9c;top:1031.6px;left:195.6px;transform-origin:0 50%;transform:scaleX(0.8282);">Object: Equipment Storage</span>
<svg width="1920" height="1200"><polygon points="168,1037.5 177,1044.5 168,1051.5" fill="#9c9c9c"/></svg>
<span class="t" style="font-size:19px;color:#fff;top:216.4px;right:1481px;transform-origin:100% 50%;transform:scaleX(0.8826);text-shadow:1.13px 1px 0 #000;">Variable Name</span>
<div class="a" style="left:446px;top:211px;width:492px;height:29px;background:#1a1a1a;box-sizing:border-box;border-bottom:1px solid #e8e8e8;border-right:1px solid #555;"></div>
<div class="a" style="left:188px;top:257px;width:750px;height:122px;background:#1a1a1a;box-sizing:border-box;border:1px solid #777;border-top-color:#eee;border-bottom-color:#eee;"></div>
<div class="a" style="left:196px;top:255px;width:25px;height:4px;background:#333;"></div>
<span class="t" style="font-size:19px;color:#fff;top:248.9px;left:197px;transform-origin:0 50%;transform:scaleX(0.9439);text-shadow:1.06px 1px 0 #000;">Init</span>
<span class="t" style="font-size:19px;color:#fff;top:428.4px;right:1481px;transform-origin:100% 50%;transform:scaleX(0.9126);text-shadow:1.10px 1px 0 #000;">Position</span>
<div class="a" style="left:474.5px;top:422px;width:135px;height:30px;background:#1a1a1a;box-sizing:border-box;border:1px solid #8a8a8a;border-bottom-color:#c8c8c8;"></div>
<div class="a" style="left:446px;top:422px;width:29.5px;height:30px;background:#c8301c;"></div>
<span class="t" style="font-size:18.5px;color:#fff;top:428.3px;left:454.8px;transform-origin:50% 50%;transform:scaleX(0.8506);">X</span>
<svg width="1" height="1"><text x="483.70 495.70 507.70 522.41 531.70 543.70 555.70" y="443.1" font-family="Liberation Sans, sans-serif" font-size="19.5" fill="#fff" xml:space="preserve">950.479</text></svg>
<div class="a" style="left:638.5px;top:422px;width:134.5px;height:30px;background:#1a1a1a;box-sizing:border-box;border:1px solid #8a8a8a;border-bottom-color:#c8c8c8;"></div>
<div class="a" style="left:610px;top:422px;width:29.5px;height:30px;background:#93d13a;"></div>
<span class="t" style="font-size:18.5px;color:#fff;top:428.3px;left:618.8px;transform-origin:50% 50%;transform:scaleX(0.8506);">Y</span>
<svg width="1" height="1"><text x="647.70 659.70 671.70 683.70 698.41 707.70 719.70 731.70" y="443.1" font-family="Liberation Sans, sans-serif" font-size="19.5" fill="#fff" xml:space="preserve">3107.171</text></svg>
<div class="a" style="left:802.5px;top:422px;width:135.5px;height:30px;background:#1a1a1a;box-sizing:border-box;border:1px solid #8a8a8a;border-bottom-color:#c8c8c8;"></div>
<div class="a" style="left:774px;top:422px;width:29.5px;height:30px;background:#4285e8;"></div>
<span class="t" style="font-size:18.5px;color:#fff;top:428.3px;left:783.3px;transform-origin:50% 50%;transform:scaleX(0.9282);">Z</span>
<svg width="1" height="1"><text x="811.70" y="443.1" font-family="Liberation Sans, sans-serif" font-size="19.5" fill="#fff" xml:space="preserve">0</text></svg>
<span class="t" style="font-size:19px;color:#fff;top:462.4px;right:1481px;transform-origin:100% 50%;transform:scaleX(0.8912);text-shadow:1.12px 1px 0 #000;">Rotation</span>
<div class="a" style="left:474.5px;top:456px;width:135px;height:30px;background:#1a1a1a;box-sizing:border-box;border:1px solid #8a8a8a;border-bottom-color:#c8c8c8;"></div>
<div class="a" style="left:446px;top:456px;width:29.5px;height:30px;background:#c8301c;"></div>
<span class="t" style="font-size:18.5px;color:#fff;top:462.3px;left:454.8px;transform-origin:50% 50%;transform:scaleX(0.8506);">X</span>
<svg width="1" height="1"><text x="483.70" y="477.1" font-family="Liberation Sans, sans-serif" font-size="19.5" fill="#fff" xml:space="preserve">0</text></svg>
<div class="a" style="left:638.5px;top:456px;width:134.5px;height:30px;background:#1a1a1a;box-sizing:border-box;border:1px solid #8a8a8a;border-bottom-color:#c8c8c8;"></div>
<div class="a" style="left:610px;top:456px;width:29.5px;height:30px;background:#93d13a;"></div>
<span class="t" style="font-size:18.5px;color:#fff;top:462.3px;left:618.8px;transform-origin:50% 50%;transform:scaleX(0.8506);">Y</span>
<svg width="1" height="1"><text x="647.70" y="477.1" font-family="Liberation Sans, sans-serif" font-size="19.5" fill="#fff" xml:space="preserve">0</text></svg>
<div class="a" style="left:802.5px;top:456px;width:135.5px;height:30px;background:#1a1a1a;box-sizing:border-box;border:1px solid #8a8a8a;border-bottom-color:#c8c8c8;"></div>
<div class="a" style="left:774px;top:456px;width:29.5px;height:30px;background:#4285e8;"></div>
<span class="t" style="font-size:18.5px;color:#fff;top:462.3px;left:783.3px;transform-origin:50% 50%;transform:scaleX(0.9282);">Z</span>
<svg width="1" height="1"><text x="811.70" y="477.1" font-family="Liberation Sans, sans-serif" font-size="19.5" fill="#fff" xml:space="preserve">0</text></svg>
<span class="t" style="font-size:19px;color:#fff;top:496.4px;right:1481px;transform-origin:100% 50%;transform:scaleX(0.8749);text-shadow:1.14px 1px 0 #000;">Placement Radius</span>
<div class="a" style="left:446px;top:490px;width:492px;height:30px;background:#1a1a1a;box-sizing:border-box;border:1px solid #8a8a8a;border-bottom-color:#c8c8c8;"></div>
<span class="t" style="font-size:19px;color:#fff;top:496.4px;left:453.5px;transform-origin:0 50%;transform:scaleX(0.8877);">0</span>
<span class="t" style="font-size:19px;color:#fff;top:568.4px;right:1481px;transform-origin:100% 50%;transform:scaleX(0.8801);text-shadow:1.14px 1px 0 #000;">Role Description</span>
<div class="a" style="left:446px;top:563px;width:492px;height:29px;background:#1a1a1a;box-sizing:border-box;border-bottom:1px solid #e8e8e8;border-right:1px solid #555;"></div>
<span class="t" style="font-size:19px;color:#fff;top:641.4px;right:1481px;transform-origin:100% 50%;transform:scaleX(0.8949);text-shadow:1.12px 1px 0 #000;">Lock</span>
<div class="a" style="left:446px;top:635px;width:462px;height:30px;background:#0b0b0b;"></div>
<div class="a" style="left:908px;top:635px;width:30px;height:30px;background:#212321;"></div>
<svg width="1920" height="1200"><polygon points="916.5,648 930,648 923.2,655" fill="#fff"/></svg>
<span class="t" style="font-size:19px;color:#fff;top:641.4px;left:453.5px;transform-origin:0 50%;transform:scaleX(0.8975);">Default</span>
<span class="t" style="font-size:19px;color:#fff;top:674.9px;right:1481px;transform-origin:100% 50%;transform:scaleX(0.9150);text-shadow:1.09px 1px 0 #000;">Health / Armor</span>
<div class="a" style="left:446px;top:669px;width:29.5px;height:30px;background:#1a1a1a;"></div>
<div class="a" style="left:480px;top:669px;width:357px;height:30px;background:#a2a2a2;"></div>
<div class="a" style="left:842px;top:669px;width:29px;height:30px;background:#1a1a1a;"></div>
<svg width="1920" height="1200"><polygon points="455.5,684 466,678 466,690" fill="#ccc"/><polygon points="861.5,684 851,678 851,690" fill="#bbb"/></svg>
<div class="a" style="left:871.5px;top:669px;width:66.5px;height:30px;background:#1a1a1a;box-sizing:border-box;border:1px solid #666;border-top-color:#ddd;border-bottom-color:#fff;"></div>
<span class="t" style="font-size:19px;color:#fff;top:674.9px;left:880.5px;transform-origin:0 50%;transform:scaleX(0.8264);">100%</span>
<span class="t" style="font-size:19px;color:#fff;top:708.9px;right:1481px;transform-origin:100% 50%;transform:scaleX(0.8491);text-shadow:1.18px 1px 0 #000;">Fuel</span>
<div class="a" style="left:446px;top:703px;width:29.5px;height:30px;background:#1a1a1a;"></div>
<div class="a" style="left:480px;top:703px;width:357px;height:30px;background:#a2a2a2;"></div>
<div class="a" style="left:842px;top:703px;width:29px;height:30px;background:#1a1a1a;"></div>
<svg width="1920" height="1200"><polygon points="455.5,718 466,712 466,724" fill="#ccc"/><polygon points="861.5,718 851,712 851,724" fill="#bbb"/></svg>
<div class="a" style="left:871.5px;top:703px;width:66.5px;height:30px;background:#1a1a1a;box-sizing:border-box;border:1px solid #666;border-top-color:#ddd;border-bottom-color:#fff;"></div>
<span class="t" style="font-size:19px;color:#fff;top:708.9px;left:880.5px;transform-origin:0 50%;transform:scaleX(0.8264);">100%</span>
<span class="t" style="font-size:19px;color:#fff;top:742.9px;right:1481px;transform-origin:100% 50%;transform:scaleX(0.9075);text-shadow:1.10px 1px 0 #000;">Ammunition</span>
<div class="a" style="left:446px;top:737px;width:29.5px;height:30px;background:#1a1a1a;"></div>
<div class="a" style="left:480px;top:737px;width:357px;height:30px;background:#a2a2a2;"></div>
<div class="a" style="left:842px;top:737px;width:29px;height:30px;background:#1a1a1a;"></div>
<svg width="1920" height="1200"><polygon points="455.5,752 466,746 466,758" fill="#ccc"/><polygon points="861.5,752 851,746 851,758" fill="#bbb"/></svg>
<div class="a" style="left:871.5px;top:737px;width:66.5px;height:30px;background:#1a1a1a;box-sizing:border-box;border:1px solid #666;border-top-color:#ddd;border-bottom-color:#fff;"></div>
<span class="t" style="font-size:19px;color:#fff;top:742.9px;left:880.5px;transform-origin:0 50%;transform:scaleX(0.8264);">100%</span>
<span class="t" style="font-size:19px;color:#fff;top:814.9px;right:1481px;transform-origin:100% 50%;transform:scaleX(0.8759);text-shadow:1.14px 1px 0 #000;">Enable Dynamic Simulation</span>
<div class="a" style="left:451.2px;top:817.8px;width:19px;height:19px;box-sizing:border-box;border:1.5px solid #b4b4b4;"></div>
<span class="t" style="font-size:19px;color:#fff;top:848.9px;right:1481px;transform-origin:100% 50%;transform:scaleX(0.8791);text-shadow:1.14px 1px 0 #000;">Enable Simulation</span>
<div class="a" style="left:451.2px;top:851.8px;width:19px;height:19px;box-sizing:border-box;border:1.5px solid #b4b4b4;"></div>
<svg width="1920" height="1200"><polyline points="455.5,862.5 459.5,866.5 467,858.0" fill="none" stroke="#c8c8c8" stroke-width="2.2"/></svg>
<span class="t" style="font-size:19px;color:#fff;top:882.9px;right:1481px;transform-origin:100% 50%;transform:scaleX(0.8782);text-shadow:1.14px 1px 0 #000;">Simple Object</span>
<div class="a" style="left:451.2px;top:885.8px;width:19px;height:19px;box-sizing:border-box;border:1.5px solid #b4b4b4;"></div>
<span class="t" style="font-size:19px;color:#fff;top:917.4px;right:1481px;transform-origin:100% 50%;transform:scaleX(0.8588);text-shadow:1.16px 1px 0 #000;">Show Model</span>
<span class="t" style="font-size:19px;color:#fff;top:951.4px;right:1481px;transform-origin:100% 50%;transform:scaleX(0.8540);text-shadow:1.17px 1px 0 #000;">Enable Damage</span>
<div class="a" style="left:451.5px;top:920.5px;width:19px;height:19px;box-sizing:border-box;border:1.5px solid #b4b4b4;"></div>
<div class="a" style="left:451.5px;top:954.5px;width:19px;height:19px;box-sizing:border-box;border:1.5px solid #b4b4b4;"></div>
<div class="a" style="left:385px;top:908px;width:446px;height:116px;background:#000;"></div>
<span class="t" style="font-size:15.5px;color:#fff;top:916.9px;left:392px;transform-origin:0 50%;transform:scaleX(0.8812);-webkit-text-stroke:0.3px #fff;">When enabled, the object will behave like a map object (e.g., houses or</span>
<span class="t" style="font-size:15.5px;color:#fff;top:937.9px;left:392px;transform-origin:0 50%;transform:scaleX(0.8983);-webkit-text-stroke:0.3px #fff;">trees), which significantly saves performance.</span>
<span class="t" style="font-size:15.5px;color:#fff;top:979.9px;left:392px;transform-origin:0 50%;transform:scaleX(0.8969);-webkit-text-stroke:0.3px #fff;">Warning: This setting is enforced at the start of the scenario and is</span>
<span class="t" style="font-size:15.5px;color:#fff;top:1000.9px;left:392px;transform-origin:0 50%;transform:scaleX(0.9058);-webkit-text-stroke:0.3px #fff;">irreversible!</span>
<div class="a" style="left:686px;top:1085px;width:150px;height:30px;background:#000;"></div>
<div class="a" style="left:842px;top:1085px;width:150px;height:30px;background:#000;"></div>
<span class="t" style="font-size:19.5px;color:#fff;top:1091.5px;left:750.5px;transform-origin:0 50%;transform:scaleX(0.7982);">OK</span>
<span class="t" style="font-size:19.5px;color:#fff;top:1091.5px;left:882.3px;transform-origin:0 50%;transform:scaleX(0.8975);">CANCEL</span>
</body></html>
